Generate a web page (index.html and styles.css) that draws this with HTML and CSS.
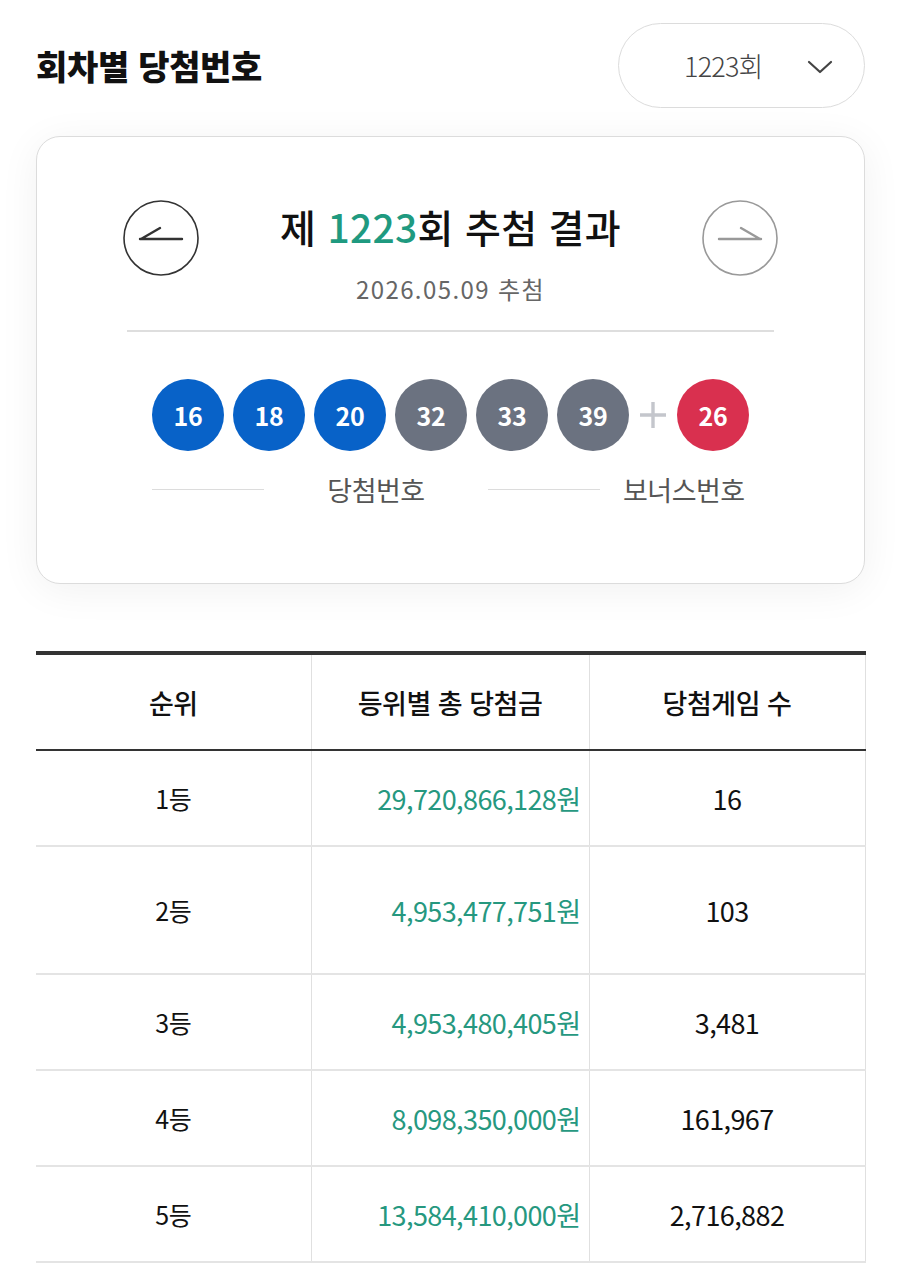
FILE: index.html
```html
<!DOCTYPE html>
<html lang="ko">
<head>
<meta charset="utf-8">
<title>회차별 당첨번호</title>
<link rel="stylesheet" href="styles.css">
</head>
<body>
<div class="page">
  <header class="top">
    <h1 class="page-title">회차별 당첨번호</h1>
    <div class="round-select">
      <span class="round-value">1223회</span>
      <svg class="chev" width="26" height="16" viewBox="0 0 26 16"><path d="M2 3 L13 13 L24 3" fill="none" stroke="#444" stroke-width="2.2" stroke-linecap="round" stroke-linejoin="round"/></svg>
    </div>
  </header>

  <section class="card">
    <div class="card-head">
      <button class="nav nav-prev" aria-label="이전">
        <svg width="76" height="76" viewBox="0 0 76 76"><circle cx="38" cy="38" r="37" fill="none" stroke="#333" stroke-width="1.6"/><path d="M17 39 H59 M18 39 L37 28" fill="none" stroke="#333" stroke-width="2.4" stroke-linecap="round"/></svg>
      </button>
      <div class="head-text">
        <div class="draw-title">제 <span class="accent">1223</span>회 추첨 결과</div>
        <div class="draw-date">2026.05.09 추첨</div>
      </div>
      <button class="nav nav-next" aria-label="다음">
        <svg width="76" height="76" viewBox="0 0 76 76"><circle cx="38" cy="38" r="37" fill="none" stroke="#999" stroke-width="1.6"/><path d="M17 39 H59 M58 39 L39 28" fill="none" stroke="#999" stroke-width="2.4" stroke-linecap="round"/></svg>
      </button>
    </div>
    <div class="divider"></div>
    <div class="balls">
      <span class="ball blue">16</span>
      <span class="ball blue">18</span>
      <span class="ball blue">20</span>
      <span class="ball gray">32</span>
      <span class="ball gray">33</span>
      <span class="ball gray">39</span>
      <span class="plus">
        <svg width="30" height="30" viewBox="0 0 30 30"><path d="M15 2 V28 M2 15 H28" stroke="#c4c6cc" stroke-width="3.4"/></svg>
      </span>
      <span class="ball red">26</span>
    </div>
    <div class="labels">
      <span class="label-line"></span>
      <span class="label l-main">당첨번호</span>
      <span class="label-line"></span>
      <span class="label l-bonus">보너스번호</span>
    </div>
  </section>

  <table class="prize">
    <colgroup><col class="c1"><col class="c2"><col class="c3"></colgroup>
    <thead>
      <tr><th>순위</th><th>등위별 총 당첨금</th><th>당첨게임 수</th></tr>
    </thead>
    <tbody>
      <tr class="r-std"><td>1등</td><td class="amt">29,720,866,128원</td><td>16</td></tr>
      <tr class="r-tall"><td>2등</td><td class="amt">4,953,477,751원</td><td>103</td></tr>
      <tr class="r-std"><td>3등</td><td class="amt">4,953,480,405원</td><td>3,481</td></tr>
      <tr class="r-std"><td>4등</td><td class="amt">8,098,350,000원</td><td>161,967</td></tr>
      <tr class="r-std"><td>5등</td><td class="amt">13,584,410,000원</td><td>2,716,882</td></tr>
    </tbody>
  </table>
</div>
</body>
</html>
```

FILE: styles.css
```css
* { box-sizing: border-box; }
html, body { margin: 0; padding: 0; background: #fff; }
body {
  font-family: "Noto Sans CJK KR", "Noto Sans", sans-serif;
  color: #111;
}
.page { padding: 0 35px 0 36px; }

.top {
  display: flex;
  justify-content: space-between;
  align-items: center;
  padding-top: 23px;
}
.page-title {
  margin: 0;
  font-size: 34px;
  font-weight: 900;
  letter-spacing: -0.3px;
  color: #111;
  line-height: 42px;
}
.round-select {
  width: 247px;
  height: 85px;
  border: 1.5px solid #dcdcdc;
  border-radius: 43px;
  display: flex;
  align-items: center;
  padding-left: 65px;
  gap: 44px;
  background: #fff;
}
.round-value {
  font-size: 27px;
  font-weight: 300;
  color: #444;
  letter-spacing: -0.8px;
}
.chev { margin-top: 2px; }

.card {
  margin-top: 28px;
  height: 448px;
  border: 1.5px solid #dcdcdc;
  border-radius: 24px;
  background: #fff;
  box-shadow: 0 6px 40px rgba(0,0,0,0.06);
  padding: 63px 86px 0;
}
.card-head {
  display: flex;
  justify-content: space-between;
  align-items: flex-start;
}
.nav {
  width: 76px;
  height: 76px;
  padding: 0;
  border: 0;
  background: none;
  display: block;
}
.nav svg { display: block; }
.head-text { text-align: center; padding-top: 1px; }
.draw-title {
  font-size: 39px;
  font-weight: 500;
  line-height: 50px;
  color: #111;
  letter-spacing: 0.3px;
}
.accent { color: #1f9a80; }
.draw-date {
  margin-top: 22px;
  font-size: 24px;
  line-height: 32px;
  color: #666;
  letter-spacing: 1.4px;
}
.divider {
  margin: 25px 4px 0;
  height: 1.5px;
  background: #dedede;
}
.balls {
  margin-top: 47px;
  display: flex;
  justify-content: center;
  align-items: center;
  gap: 9px;
}
.ball {
  width: 72px;
  height: 72px;
  border-radius: 50%;
  display: flex;
  align-items: center;
  justify-content: center;
  color: #fff;
  font-size: 25px;
  font-weight: 700;
  letter-spacing: -0.3px;
}
.blue { background: #0862c8; }
.gray { background: #6b7280; }
.red { background: #d9304f; }
.plus {
  width: 30px;
  display: flex;
  justify-content: center;
}
.plus svg { display: block; }
.labels {
  margin-top: 22px;
  display: flex;
  align-items: center;
  padding-left: 29px;
}
.label-line {
  width: 112px;
  height: 1.5px;
  background: #dcdcdc;
}
.label {
  font-size: 27px;
  line-height: 34px;
  color: #555;
  letter-spacing: -0.5px;
}
.l-main { width: 100px; margin: 0 62px; text-align: center; white-space: nowrap; }
.l-bonus { margin-left: 23px; white-space: nowrap; }

.prize {
  margin-top: 67px;
  width: 829px;
  border-collapse: collapse;
  table-layout: fixed;
  border-top: 4px solid #333;
}
.c1 { width: 275px; }
.c2 { width: 278px; }
.c3 { width: 276px; }
.prize th, .prize td {
  padding: 0;
  text-align: center;
  vertical-align: middle;
  font-size: 26px;
  font-weight: 400;
  color: #111;
  border-left: 1.5px solid #e0e0e0;
  letter-spacing: -0.5px;
}
.prize th:first-child, .prize td:first-child { border-left: 0; }
.prize th:last-child, .prize td:last-child { border-right: 1.5px solid #e0e0e0; }
.prize thead tr { height: 97px; border-bottom: 2px solid #333; }
.prize th { font-weight: 500; font-size: 27px; }
.prize tbody tr { border-bottom: 2px solid #e4e4e4; }
.r-std { height: 96px; }
.r-tall { height: 128px; }
.prize td:first-child { font-size: 25px; }
.prize td.amt {
  text-align: right;
  padding-right: 8px;
  color: #26987f;
  font-size: 27px;
  letter-spacing: -0.6px;
}
.prize td:last-child { font-size: 27px; letter-spacing: -0.6px; }
```
